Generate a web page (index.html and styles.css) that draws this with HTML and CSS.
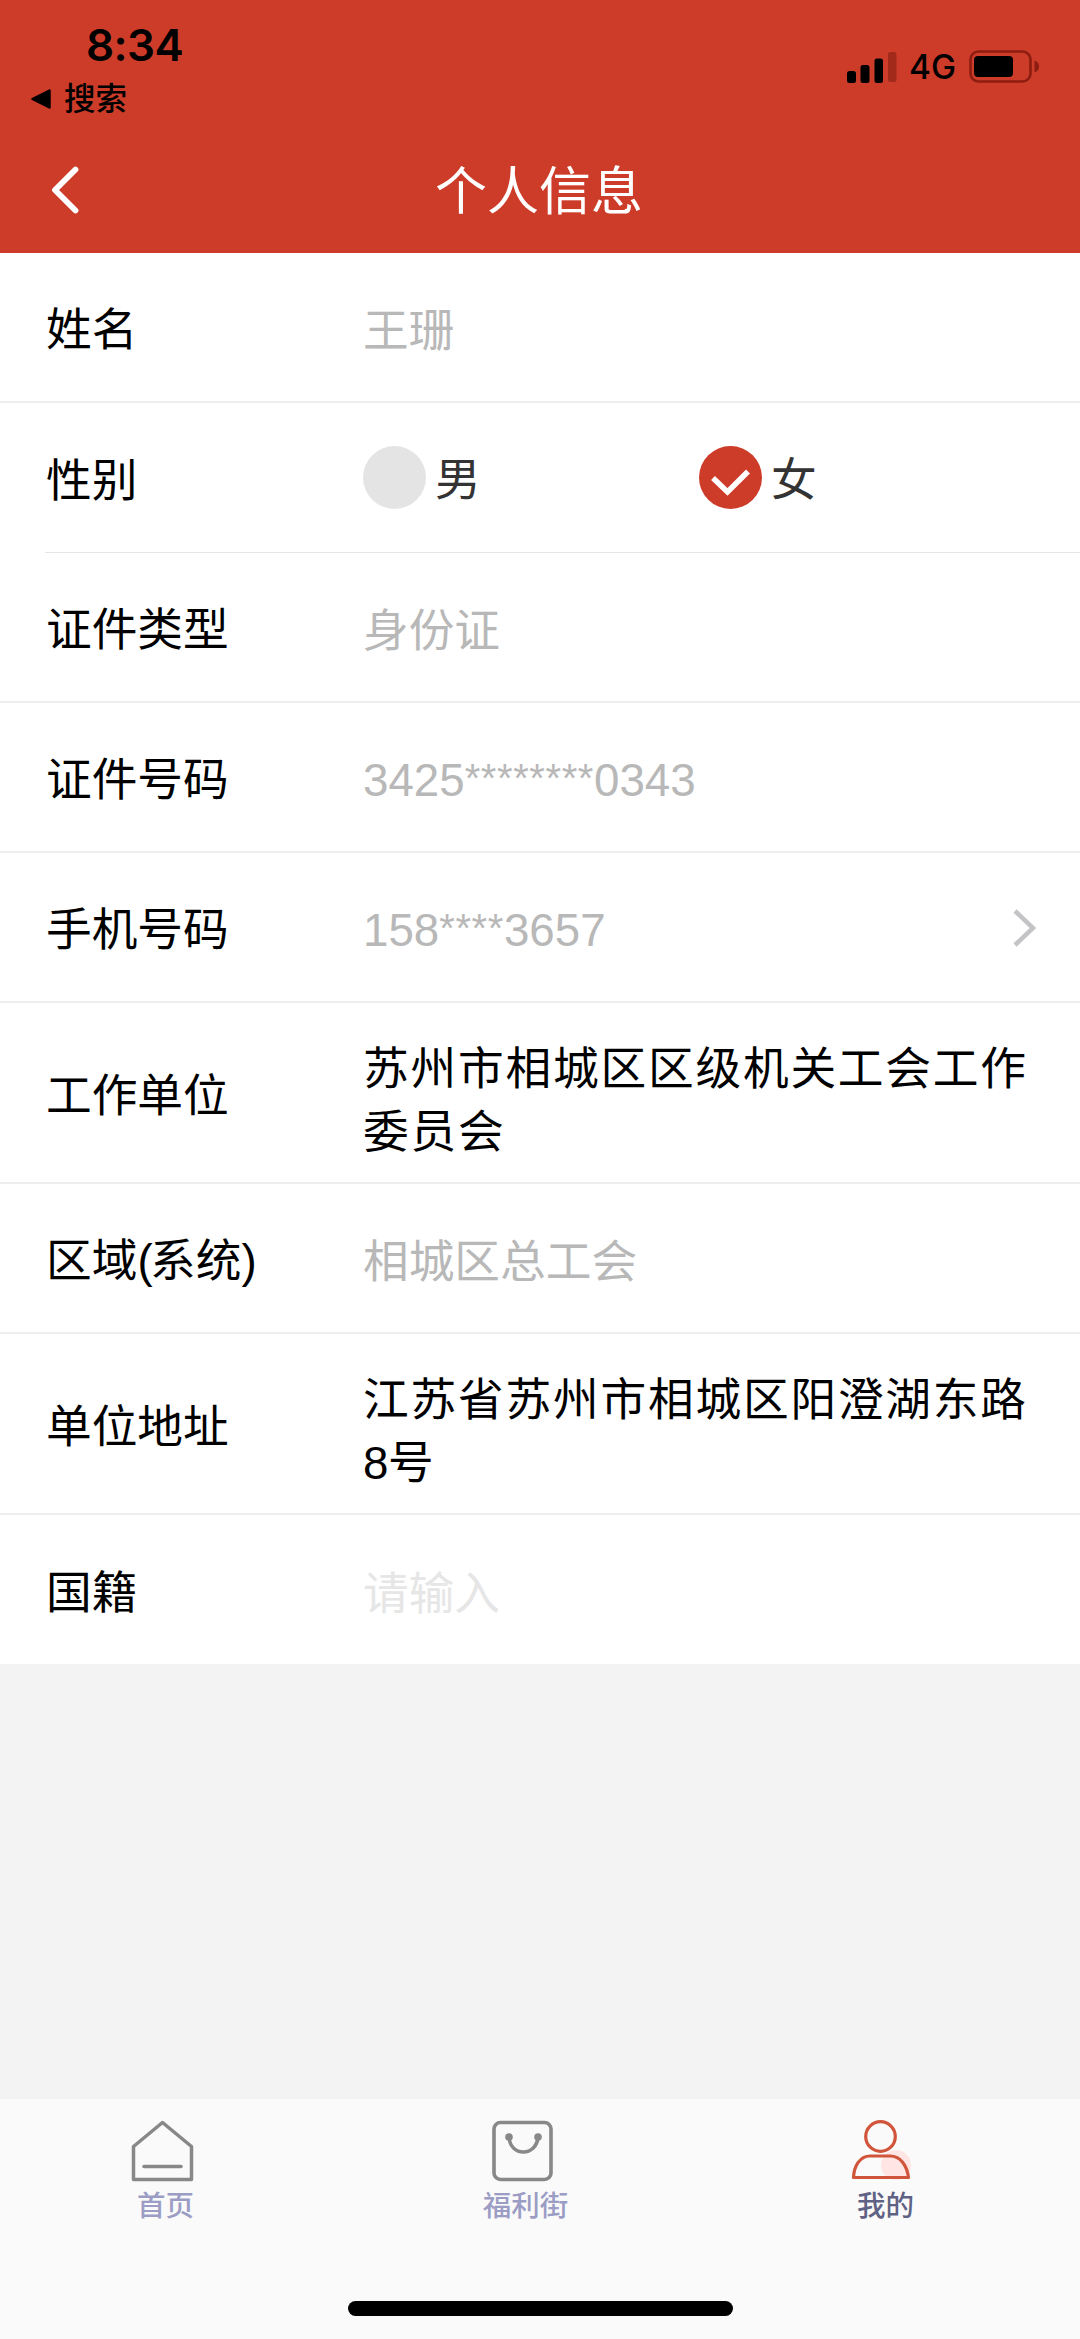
FILE: index.html
```html
<!DOCTYPE html>
<html lang="zh-CN">
<head>
<meta charset="utf-8">
<title>个人信息</title>
<link rel="stylesheet" href="styles.css">
</head>
<body>
<header class="header">
  <div class="status">
    <div class="status-left">
      <div class="time">8:34</div>
      <div class="return">
        <svg width="20" height="20" viewBox="0 0 20 20"><path d="M1.500 10 18.500 1.500V18.500Z" stroke="#000" stroke-width="2.500" stroke-linejoin="round"/></svg>
        <span>搜索</span>
      </div>
    </div>
    <div class="status-right">
      <svg class="signal" width="50" height="32" viewBox="0 0 50 32"><rect x="0" y="20" width="9" height="12" rx="2.500"/><rect x="13.500" y="14" width="9" height="18" rx="2.500"/><rect x="27.500" y="7.500" width="8.500" height="24.500" rx="2.500"/><rect x="41" y="1" width="8.500" height="30" rx="2.500" fill="#a12a1b"/></svg>
      <span class="network">4G</span>
      <svg width="71" height="33" viewBox="0 0 71 33"><rect x="1.500" y="1.500" width="60" height="30" rx="8" fill="none" stroke="#8c1d10" stroke-width="2.600"/><rect x="5" y="6" width="39" height="21" rx="4"/><path d="M65.500 10.500Q70 12 70 16.500T65.500 22.500Z" fill="#8c1d10"/></svg>
    </div>
  </div>
  <nav class="nav">
    <svg width="30" height="50" viewBox="0 0 30 50" fill="none" stroke="#fff" stroke-width="5.800" stroke-linecap="round" stroke-linejoin="round"><path d="M26.500 4.500 6 25 26.500 45.500"/></svg>
    <h1 class="title">个人信息</h1>
  </nav>
</header>
<main class="form">
  <div class="row"><span class="label">姓名</span><span class="value muted">王珊</span></div>
  <div class="row inset"><span class="label">性别</span>
    <div class="radios">
      <div class="radio"><span class="dot"></span><span class="option">男</span></div>
      <div class="radio"><span class="dot checked"><svg width="63" height="63" viewBox="0 0 63 63" fill="none" stroke="#fff" stroke-width="5.500"><path d="M14 32 28.500 46 49 25.500"/></svg></span><span class="option">女</span></div>
    </div>
  </div>
  <div class="row"><span class="label">证件类型</span><span class="value muted">身份证</span></div>
  <div class="row"><span class="label">证件号码</span><span class="value muted number">3425<span class="mask">********</span>0343</span></div>
  <div class="row"><span class="label">手机号码</span><span class="value muted number">158<span class="mask">****</span>3657</span>
    <svg class="more" width="26" height="40" viewBox="0 0 26 40" fill="none" stroke="#c4c4c6" stroke-width="4.500"><path d="M4 4 22 21 4 38"/></svg></div>
  <div class="row tall"><span class="label">工作单位</span><span class="value spaced">苏州市相城区区级机关工会工作委员会</span></div>
  <div class="row"><span class="label">区域<span class="paren">(</span>系统<span class="paren">)</span></span><span class="value muted">相城区总工会</span></div>
  <div class="row tall"><span class="label">单位地址</span><span class="value spaced">江苏省苏州市相城区阳澄湖东路<span class="digit">8</span>号</span></div>
  <div class="row last"><span class="label">国籍</span><span class="value muted placeholder">请输入</span></div>
</main>
<footer class="footer">
  <div class="tabs">
    <div class="tab">
      <svg width="64" height="64" viewBox="0 0 64 64" fill="none" stroke="#888" stroke-width="3.500" stroke-linejoin="round"><path d="M3.500 27.500 32.500 3.500 61.500 27.500V60.500H3.500Z"/><path d="M14 47.500H51" stroke-linecap="round"/></svg>
      <span>首页</span>
    </div>
    <div class="tab">
      <svg width="64" height="64" viewBox="0 0 64 64" fill="none" stroke="#888" stroke-width="3.600"><rect x="4" y="3.500" width="57" height="57" rx="6.500"/><path d="M19 18C20 38 46.500 38 48 18"/><circle cx="19" cy="18" r="3.800" fill="#888" stroke="none"/><circle cx="48" cy="18" r="3.800" fill="#888" stroke="none"/></svg>
      <span>福利街</span>
    </div>
    <div class="tab active">
      <svg width="64" height="64" viewBox="0 0 64 64" fill="none" stroke="#d1553b" stroke-width="3.200"><circle cx="46" cy="46" r="15" fill="#ffe5e3" stroke="none"/><circle cx="30.500" cy="17.500" r="14.800"/><path d="M3.500 58.500C4 47 10 37 20 37H40C51 37 57 47 58.500 58.500Z" stroke-linejoin="round"/></svg>
      <span>我的</span>
    </div>
  </div>
  <div class="home-bar"></div>
</footer>
</body>
</html>
```
FILE: styles.css
```css
* { box-sizing: border-box; }
body {
  margin: 0;
  width: 1080px;
  height: 2339px;
  display: flex;
  flex-direction: column;
  background: #f3f3f3;
  color: #000;
  font-family: "Liberation Sans", "Noto Sans CJK SC", sans-serif;
  font-size: 45.7px;
}
svg { display: block; flex: none; }
.header { height: 253px; background: #cd3b29; flex: none; }
.status { height: 127px; display: flex; justify-content: space-between; padding: 18px 40px 0 31px; }
.time {
  padding-left: 55px;
  font: 600 44px/54px Inter, sans-serif;
  letter-spacing: -0.6px;
}
.return {
  display: flex;
  align-items: center;
  gap: 13px;
  height: 54px;
  font-size: 31.5px;
  font-weight: 500;
  line-height: 54px;
}
.status-right { display: flex; align-items: center; height: 33px; margin-top: 32px; }
.network { margin: 0 13px 0 12px; padding-top: 1px; font: 500 33.500px/34px Inter, sans-serif; }
.nav {
  height: 126px;
  padding: 0 51px 0 49px;
  display: grid;
  grid-template-columns: 30px 1fr 30px;
  align-items: center;
  color: #fff;
}
.title { margin: 0; padding-top: 3px; text-align: center; font-size: 52px; line-height: 76px; font-weight: 400; }
.form { background: #fff; flex: none; }
.row {
  height: 150px;
  display: flex;
  align-items: center;
  padding: 0 40px 0 46px;
  border-bottom: 2px solid #eee;
}
.row.inset { margin-left: 45px; padding-left: 1px; border-bottom: 1px solid #e5e5e5; }
.row.tall { height: 181px; }
.row.last { height: 149px; border-bottom: 0; }
.label { width: 317px; padding-bottom: 2px; flex: none; white-space: nowrap; }
.paren { letter-spacing: -2.5px; }
.value { flex: 1; line-height: 63px; }
.spaced { letter-spacing: 1.8px; margin-right: -10px; padding-top: 16px; }
.muted { color: #b8b8b8; padding-top: 9px; }
.number { padding-top: 6px; }
.placeholder { color: #e6e6e6; }
.mask { font-size: 40px; line-height: 0; letter-spacing: 0.6px; vertical-align: 4px; }
.digit { letter-spacing: -0.5px; }
.more { margin-right: 3px; }
.radios { display: flex; color: #333; }
.radio { display: flex; align-items: center; gap: 9px; width: 336px; }
.option { padding-bottom: 4px; }
.dot { width: 63px; height: 63px; border-radius: 50%; background: #e4e4e4; flex: none; }
.dot.checked { background: #cd3b29; }
.footer { height: 240px; margin-top: auto; background: #fafafa; flex: none; }
.tabs { display: flex; height: 202px; padding-top: 20px; }
.tab {
  width: 360px;
  padding-left: 130px;
  color: #9c9dc5;
  font-size: 28.5px;
  font-weight: 500;
  line-height: 46px;
}
.tab span { width: 71px; display: flex; justify-content: center; white-space: nowrap; }
.tab.active { color: #5f6284; }
.home-bar { width: 385px; height: 15px; border-radius: 8px; background: #000; margin: 0 auto; }
```
